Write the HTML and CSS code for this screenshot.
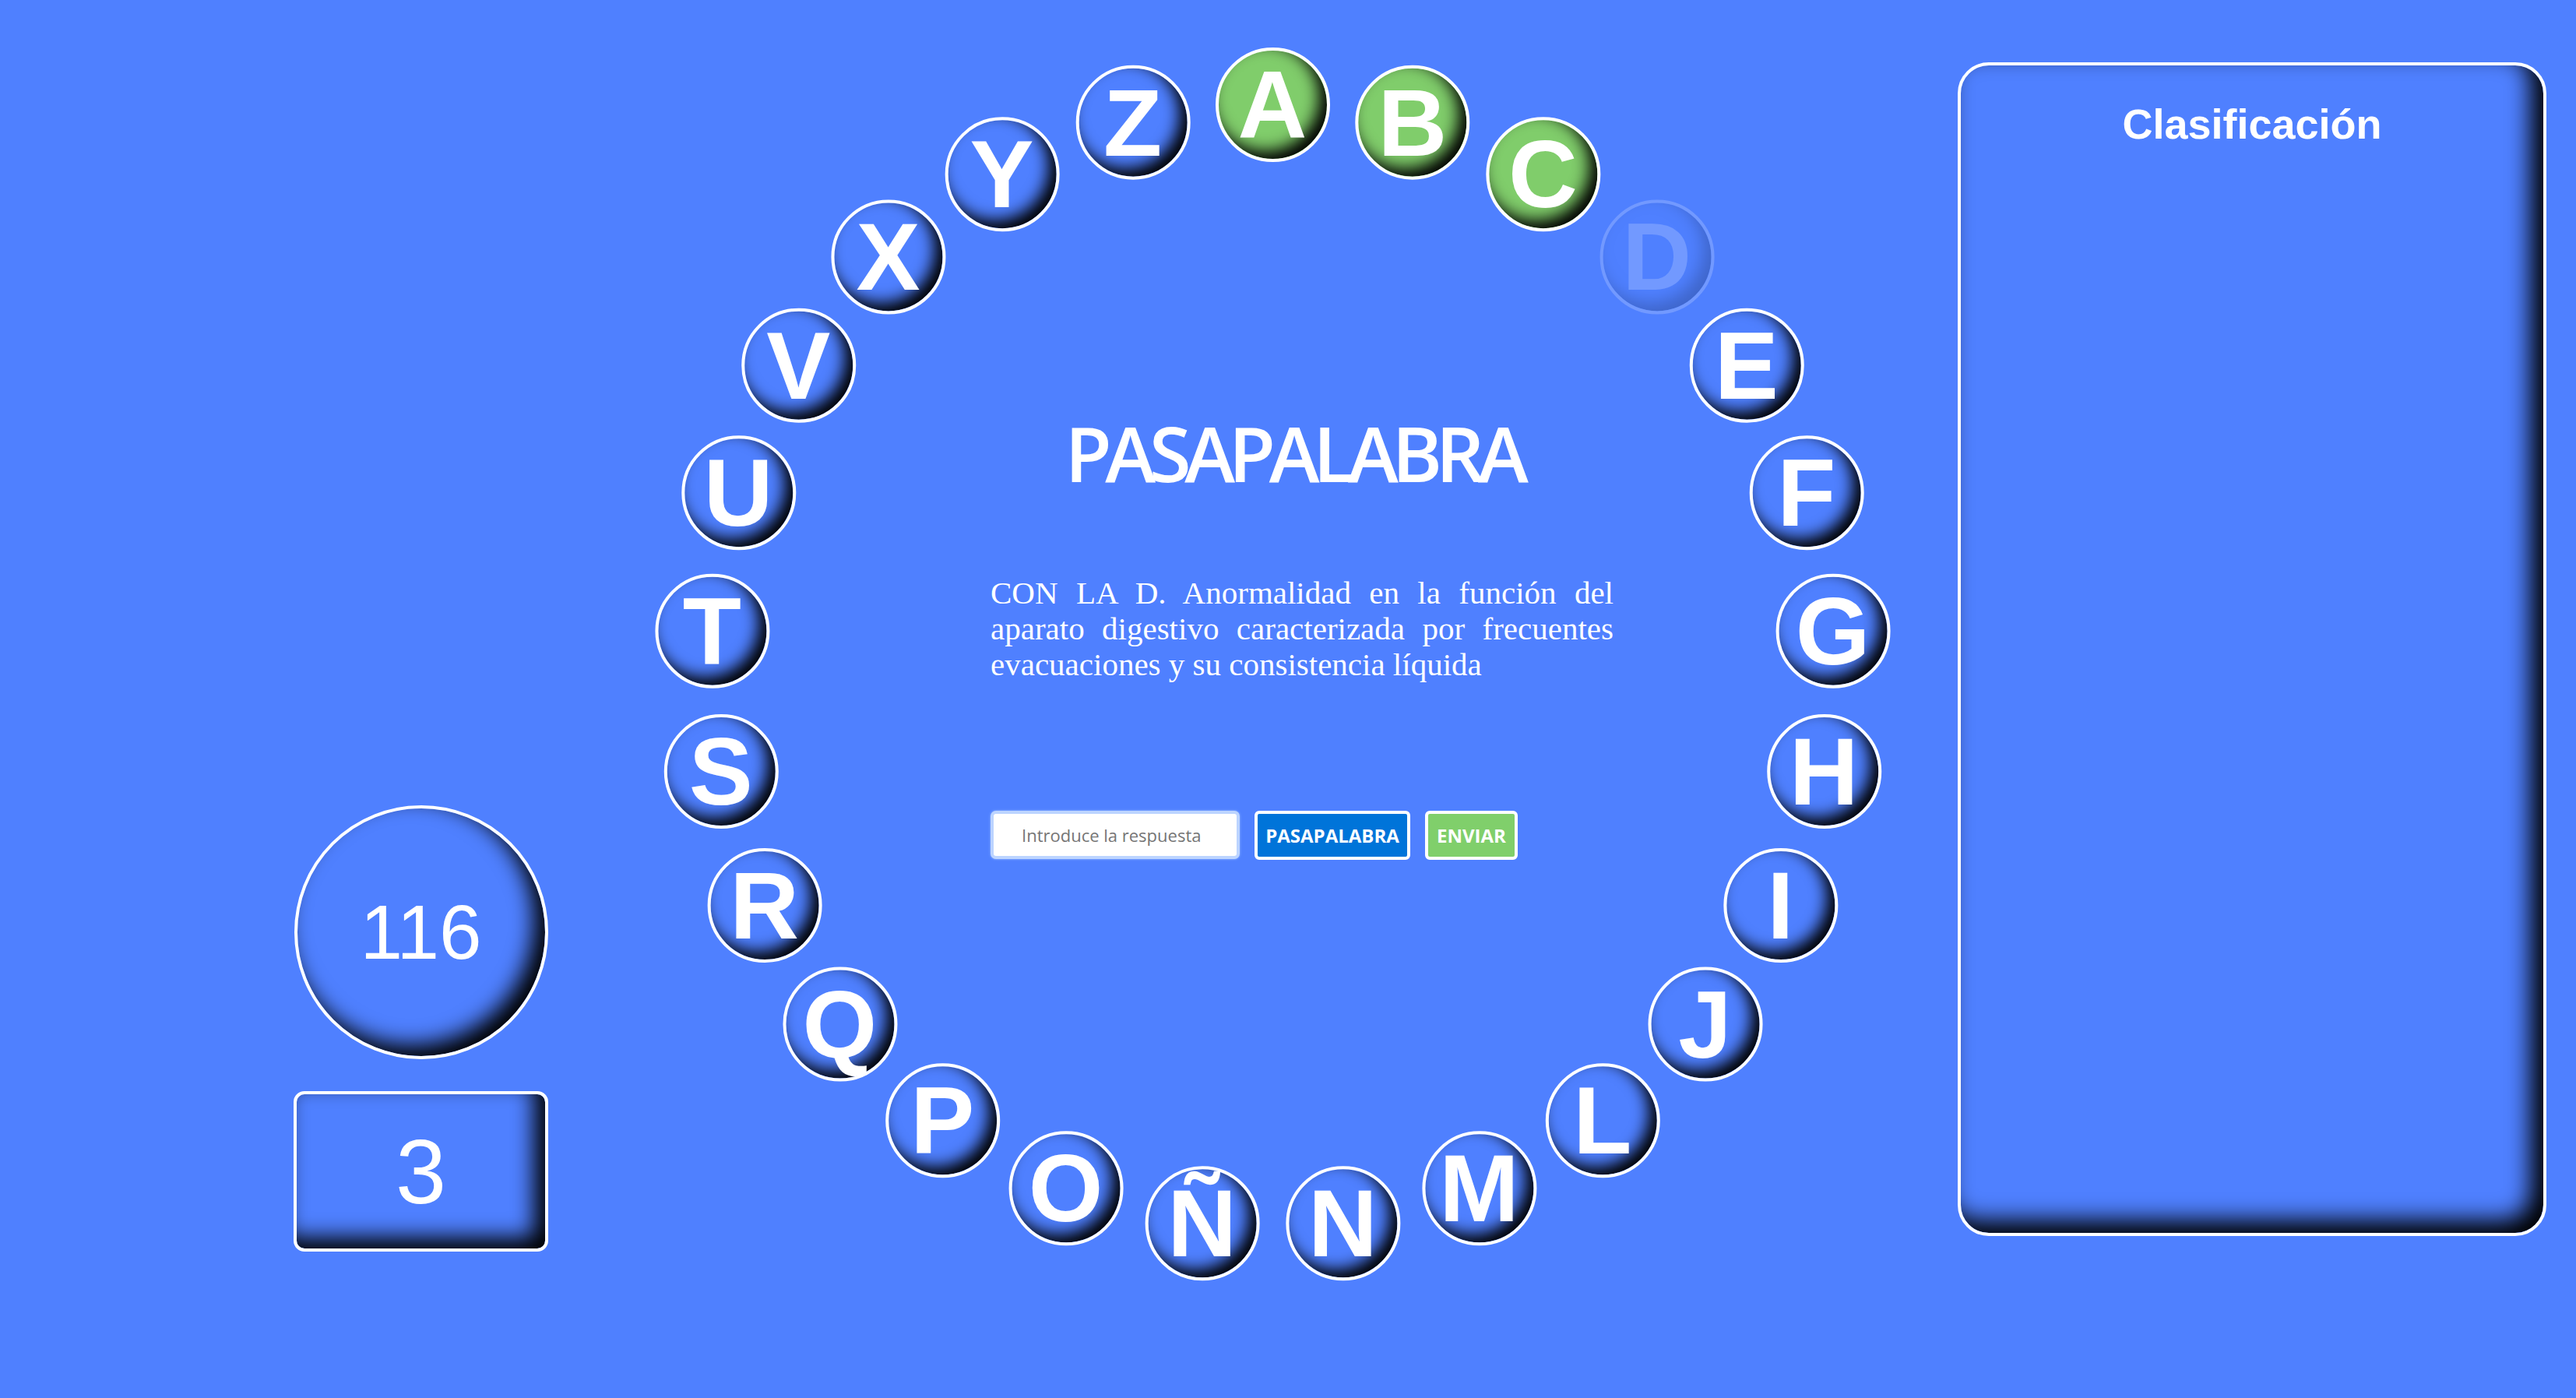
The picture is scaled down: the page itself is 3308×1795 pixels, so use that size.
FILE: index.html
```html
<!DOCTYPE html>
<html lang="es">
<head>
<meta charset="utf-8">
<title>Pasapalabra</title>
<link rel="stylesheet" href="styles.css">
</head>
<body>
<main class="game">
  <aside class="stats">
    <div class="timer">116</div>
    <div class="score">3</div>
  </aside>
  <section class="board">
    <ul class="rosco">
      <li class="letter correct" style="--a:0deg">A</li>
      <li class="letter correct" style="--a:14.4deg">B</li>
      <li class="letter correct" style="--a:28.8deg">C</li>
      <li class="letter current" style="--a:43.2deg">D</li>
      <li class="letter" style="--a:57.6deg">E</li>
      <li class="letter" style="--a:72deg">F</li>
      <li class="letter" style="--a:86.4deg">G</li>
      <li class="letter" style="--a:100.8deg">H</li>
      <li class="letter" style="--a:115.2deg">I</li>
      <li class="letter" style="--a:129.6deg">J</li>
      <li class="letter" style="--a:144deg">L</li>
      <li class="letter" style="--a:158.4deg">M</li>
      <li class="letter" style="--a:172.8deg">N</li>
      <li class="letter" style="--a:187.2deg">Ñ</li>
      <li class="letter" style="--a:201.6deg">O</li>
      <li class="letter" style="--a:216deg">P</li>
      <li class="letter" style="--a:230.4deg">Q</li>
      <li class="letter" style="--a:244.8deg">R</li>
      <li class="letter" style="--a:259.2deg">S</li>
      <li class="letter" style="--a:273.6deg">T</li>
      <li class="letter" style="--a:288deg">U</li>
      <li class="letter" style="--a:302.4deg">V</li>
      <li class="letter" style="--a:316.8deg">X</li>
      <li class="letter" style="--a:331.2deg">Y</li>
      <li class="letter" style="--a:345.6deg">Z</li>
    </ul>
    <div class="center">
      <h1 class="title">PASAPALABRA</h1>
      <p class="question">CON LA D. Anormalidad en la función del aparato digestivo caracterizada por frecuentes evacuaciones y su consistencia líquida</p>
      <form class="answer">
        <input class="answer-input" type="text" placeholder="Introduce la respuesta">
        <button class="btn btn-pass" type="button">PASAPALABRA</button>
        <button class="btn btn-send" type="button">ENVIAR</button>
      </form>
    </div>
  </section>
  <aside class="ranking">
    <h2 class="ranking-title">Clasificación</h2>
  </aside>
</main>
</body>
</html>
```

FILE: styles.css
```css
* {
  box-sizing: border-box;
}

html,
body {
  margin: 0;
  padding: 0;
}

body {
  background: #4f80ff;
  color: #fff;
  font-family: "Liberation Sans", Arial, sans-serif;
  overflow: hidden;
}

.game {
  display: flex;
  align-items: flex-start;
  width: 3308px;
  height: 1795px;
  padding-left: 377px;
}

/* Left column: timer + score */
.stats {
  flex: none;
  align-self: flex-end;
  margin-bottom: 188px;
  width: 327px;
  display: flex;
  flex-direction: column;
  align-items: center;
  gap: 41px;
}

.timer {
  width: 326px;
  height: 326px;
  border: 4px solid #fff;
  border-radius: 50%;
  box-shadow: inset -14px -14px 28px #000;
  display: flex;
  align-items: center;
  justify-content: center;
  font-size: 98px;
}

.score {
  width: 327px;
  height: 206px;
  border: 4px solid #fff;
  border-radius: 14px;
  box-shadow: inset -14px -14px 28px #000;
  display: flex;
  align-items: center;
  justify-content: center;
  font-size: 117px;
}

/* Board with the letter ring */
.board {
  flex: none;
  position: relative;
  width: 1600px;
  height: 1600px;
  margin: 55px 0 0 130px;
}

.rosco {
  list-style: none;
  margin: 0;
  padding: 0;
}

.letter {
  position: absolute;
  left: 50%;
  top: 50%;
  width: 147px;
  height: 147px;
  margin: -73.5px 0 0 -73.5px;
  border: 4px solid #fff;
  border-radius: 50%;
  background: #4f80ff;
  box-shadow: inset -10px -10px 20px #000;
  display: flex;
  align-items: center;
  justify-content: center;
  font-weight: 700;
  font-size: 123px;
  line-height: 1;
  transform: rotate(var(--a)) translateY(-721px) rotate(calc(var(--a) * -1));
}

.letter.correct {
  background: #80cd6b;
}

.letter.current {
  opacity: 0.2;
}

.center {
  width: 1238px;
  padding: 468px 0 0 438px;
}

.title {
  margin: 0;
  padding-right: 22px;
  text-align: center;
  font-family: "Open Sans", sans-serif;
  font-weight: 600;
  font-size: 98px;
  line-height: 1.2;
  letter-spacing: -0.085em;
}

.question {
  margin: 97px 0 0;
  font-family: "Liberation Serif", "Times New Roman", serif;
  font-size: 41px;
  line-height: 46px;
  text-align: justify;
}

.answer {
  margin-top: 165px;
  display: flex;
  gap: 19px;
}

.answer-input {
  width: 320px;
  height: 62px;
  padding: 0 0 0 36px;
  border: 4px solid #bcd4ff;
  border-radius: 7px;
  background: #fff;
  box-shadow: 0 0 3px #9fc0ff;
  outline: none;
  font-family: "Open Sans", sans-serif;
  font-size: 22px;
  color: #333;
}

.answer-input::placeholder {
  color: #757575;
}

.btn {
  height: 63px;
  padding: 0;
  border: 4px solid #fff;
  border-radius: 6px;
  color: #fff;
  font-family: "Open Sans", sans-serif;
  font-weight: 700;
  font-size: 24px;
}

.btn-pass {
  width: 200px;
  background: #0074d9;
}

.btn-send {
  width: 119px;
  background: #80cf6b;
}

/* Ranking panel */
.ranking {
  flex: none;
  width: 756px;
  height: 1507px;
  margin: 80px 0 0 80px;
  padding-top: 44px;
  border: 4px solid #fff;
  border-radius: 40px;
  box-shadow: inset -16px -16px 30px #000;
}

.ranking-title {
  margin: 0;
  text-align: center;
  font-size: 54px;
  font-weight: 700;
}
```
